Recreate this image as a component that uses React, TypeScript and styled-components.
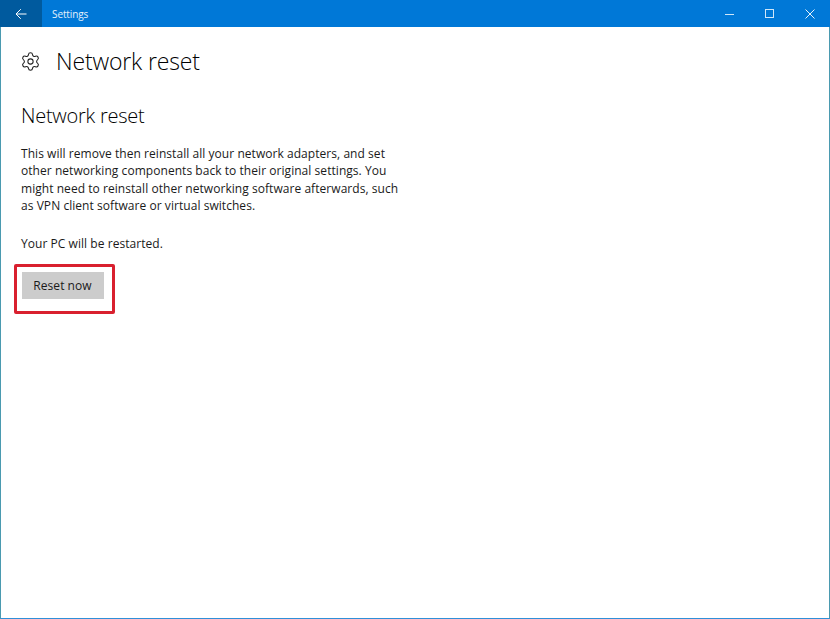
import React from 'react';
import styled, { createGlobalStyle } from 'styled-components';
import { Settings } from 'lucide-react';

const GlobalStyle = createGlobalStyle`
  html, body {
    margin: 0;
    padding: 0;
    background: #fff;
  }
  body {
    font-family: "Open Sans", "Noto Sans", "Liberation Sans", sans-serif;
  }
`;

const Window = styled.div`
  width: 830px;
  height: 619px;
  box-sizing: border-box;
  display: flex;
  flex-direction: column;
  background: #fff;
  border-left: 1px solid #4a9ab0;
  border-right: 1px solid #4a9ab0;
  border-bottom: 1px solid #2f8fd8;
`;

const TitleBar = styled.header`
  height: 27px;
  flex: none;
  display: flex;
  align-items: center;
  background: #0078d7;
  color: #fff;
  margin: 0 -1px;
`;

const BackButton = styled.div`
  width: 42px;
  height: 27px;
  display: flex;
  align-items: center;
  justify-content: center;
  background: #005a9e;
`;

const AppName = styled.span`
  margin-left: 10px;
  font-size: 10px;
  letter-spacing: -0.1px;
  color: #e4f1fb;
`;

const WindowControls = styled.div`
  margin-left: auto;
  display: flex;
  align-items: center;
  height: 27px;
`;

const ControlButton = styled.div`
  width: 40px;
  height: 27px;
  display: flex;
  align-items: center;
  justify-content: center;
`;

const Content = styled.main`
  flex: 1;
  padding: 19px 0 0 19px;
`;

const PageHeader = styled.div`
  display: flex;
  align-items: center;
  height: 30px;
  gap: 15px;
`;

const PageTitle = styled.h1`
  margin: 0;
  font-size: 23px;
  font-weight: 300;
  letter-spacing: -0.15px;
  color: #000;
`;

const SectionTitle = styled.h2`
  margin: 26px 0 0 1px;
  font-size: 20px;
  line-height: 27px;
  font-weight: 300;
  letter-spacing: -0.25px;
  color: #000;
`;

const Paragraph = styled.p`
  margin: ${({ $top }: { $top: number }) => $top}px 0 0 1px;
  width: 400px;
  font-size: 12px;
  line-height: 17.3px;
  letter-spacing: 0.05px;
  color: #1a1a1a;
`;

const ButtonWrap = styled.div`
  position: relative;
  width: 82px;
  margin: 19.5px 0 0 2px;
`;

const ResetButton = styled.button`
  display: block;
  width: 82px;
  height: 27px;
  padding: 0 1px 0 0;
  border: none;
  background: #cccccc;
  font-family: inherit;
  font-size: 12px;
  letter-spacing: 0.05px;
  color: #1a1a1a;
`;

const Highlight = styled.div`
  position: absolute;
  left: -8px;
  top: -8px;
  width: 101px;
  height: 50px;
  box-sizing: border-box;
  border: 3px solid #d9202f;
  border-radius: 2px;
`;

const App = () => {
  return (
    <>
      <GlobalStyle />
      <Window>
        <TitleBar>
          <BackButton>
            <svg width="12" height="12" viewBox="0 0 12 12" fill="none" stroke="#fff" strokeWidth="1">
              <path d="M1 6h10.5M5.8 1.2 1 6l4.8 4.8" />
            </svg>
          </BackButton>
          <AppName>Settings</AppName>
          <WindowControls>
            <ControlButton>
              <svg width="10" height="10" viewBox="0 0 10 10" stroke="#cfe6f8" fill="none">
                <path d="M0 5.5h9" />
              </svg>
            </ControlButton>
            <ControlButton>
              <svg width="10" height="10" viewBox="0 0 10 10" stroke="#cfe6f8" fill="none">
                <rect x="0.5" y="0.5" width="8" height="8" />
              </svg>
            </ControlButton>
            <ControlButton>
              <svg width="10" height="10" viewBox="0 0 10 10" stroke="#e4f1fb" fill="none">
                <path d="M0.5 0.5l9 9M9.5 0.5l-9 9" />
              </svg>
            </ControlButton>
          </WindowControls>
        </TitleBar>
        <Content>
          <PageHeader>
            <Settings size={21} strokeWidth={1.2} color="#222" />
            <PageTitle>Network reset</PageTitle>
          </PageHeader>
          <SectionTitle>Network reset</SectionTitle>
          <Paragraph $top={16}>
            This will remove then reinstall all your network adapters, and set
            <br />
            other networking components back to their original settings. You
            <br />
            might need to reinstall other networking software afterwards, such
            <br />
            as VPN client software or virtual switches.
          </Paragraph>
          <Paragraph $top={21}>Your PC will be restarted.</Paragraph>
          <ButtonWrap>
            <ResetButton>Reset now</ResetButton>
            <Highlight />
          </ButtonWrap>
        </Content>
      </Window>
    </>
  );
};

export default App;
